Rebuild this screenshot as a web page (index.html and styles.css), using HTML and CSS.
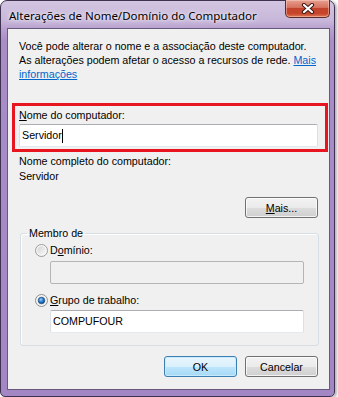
FILE: index.html
```html
<!DOCTYPE html>
<html lang="pt-BR">
<head>
    <meta charset="UTF-8">
    <title>Alterações de Nome/Domínio do Computador</title>
    <link rel="stylesheet" href="styles.css">
</head>
<body>

    <div class="window">
        <div class="titlebar">
            <span class="title">Alterações de Nome/Domínio do Computador</span>
            <div class="close-btn">
                <svg width="14" height="11" viewBox="0 0 14 11">
                    <path d="M3 2 L11 9 M11 2 L3 9" stroke="#3b1a16" stroke-width="4.2" stroke-linecap="round"/>
                    <path d="M3 2 L11 9 M11 2 L3 9" stroke="#ffffff" stroke-width="2.2" stroke-linecap="round"/>
                </svg>
            </div>
        </div>

        <div class="client">
            <p class="intro">
                Você pode alterar o nome e a associação deste computador.<br>
                As alterações podem afetar o acesso a recursos de rede. <a href="#">Mais<br>informações</a>
            </p>

            <div class="highlight">
                <label class="field-label" for="computer-name"><u>N</u>ome do computador:</label>
                <div class="textbox" id="computer-name">Servidor<span class="caret"></span></div>
            </div>

            <p class="full-label">Nome completo do computador:</p>
            <p class="full-name">Servidor</p>

            <div class="more-row">
                <button class="btn" type="button"><u>M</u>ais...</button>
            </div>

            <fieldset class="group">
                <legend>Membro de</legend>

                <div class="radio-row">
                    <svg class="radio" width="13" height="13" viewBox="0 0 13 13">
                        <defs>
                            <linearGradient id="rOff" x1="0" y1="0" x2="1" y2="1">
                                <stop offset="0" stop-color="#d4d4d4"/>
                                <stop offset="1" stop-color="#f8f8f8"/>
                            </linearGradient>
                        </defs>
                        <circle cx="6.5" cy="6.5" r="6" fill="#f6f6f6" stroke="#9a9b9b"/>
                        <circle cx="6.5" cy="6.5" r="4.2" fill="url(#rOff)"/>
                    </svg>
                    <span>D<u>o</u>mínio:</span>
                </div>
                <div class="textbox disabled"></div>

                <div class="radio-row second">
                    <svg class="radio" width="13" height="13" viewBox="0 0 13 13">
                        <defs>
                            <radialGradient id="rOn" cx="0.4" cy="0.35" r="0.7">
                                <stop offset="0" stop-color="#9fd3ff"/>
                                <stop offset="0.5" stop-color="#2f7fd0"/>
                                <stop offset="1" stop-color="#0d3f7a"/>
                            </radialGradient>
                        </defs>
                        <circle cx="6.5" cy="6.5" r="6" fill="#f4f4f4" stroke="#8e8f8f"/>
                        <circle cx="6.5" cy="6.5" r="4.2" fill="#e2e2e2"/>
                        <circle cx="6.5" cy="6.5" r="3.2" fill="url(#rOn)" stroke="#1a4f85" stroke-width="0.8"/>
                    </svg>
                    <span><u>G</u>rupo de trabalho:</span>
                </div>
                <div class="textbox workgroup">COMPUFOUR</div>
            </fieldset>

            <div class="dialog-buttons">
                <button class="btn default" type="button">OK</button>
                <button class="btn" type="button">Cancelar</button>
            </div>
        </div>
    </div>

</body>
</html>
```

FILE: styles.css
```css
body {
    margin: 0;
    background-color: #fff;
    font-family: "Liberation Sans", Arial, sans-serif;
    font-size: 10.7px;
    color: #000;
}

/* window frame */
.window {
    width: 335px;
    height: 397px;
    box-sizing: border-box;
    border: 1px solid #3f3150;
    border-radius: 7px 7px 5px 5px;
    padding: 0 4px 6px 6px;
    background: linear-gradient(to bottom, #d3c6e1 0, #c7b6d9 20px, #b9a2d0 27px, #a98dc7 40px, #a386c4 100%);
    box-shadow: 2px 1px 3px rgba(0, 0, 0, 0.3);
    display: flex;
    flex-direction: column;
}

.titlebar {
    height: 27px;
    display: flex;
    justify-content: space-between;
    align-items: flex-start;
}

.title {
    font-family: "Noto Sans", "Open Sans", sans-serif;
    font-size: 11.5px;
    margin: 7px 0 0 2px;
    line-height: 16px;
    color: #000;
    text-shadow: 0 0 6px rgba(255, 255, 255, 0.9), 0 0 3px rgba(255, 255, 255, 0.8);
}

.close-btn {
    width: 45px;
    height: 18px;
    margin-top: -1px;
    box-sizing: border-box;
    border: 1px solid #5e2a25;
    border-top: none;
    border-radius: 0 0 5px 5px;
    background: linear-gradient(to bottom, #e6a08f 0, #d6705c 45%, #c2432c 50%, #c7452b 80%, #dd7b57 100%);
    box-shadow: inset 0 0 0 1px rgba(255, 220, 210, 0.45);
    display: flex;
    justify-content: center;
    align-items: center;
}

.client {
    flex: 1;
    border: 1px solid #67597a;
    background-color: #f0f0f0;
    display: flex;
    flex-direction: column;
}

.intro {
    margin: 10px 0 0 11px;
    line-height: 14px;
}

.intro a {
    color: #0066cc;
}

.highlight {
    margin: 22px 0 0 4px;
    width: 316px;
    box-sizing: border-box;
    border: 3px solid #e8141f;
    padding: 3px 0 2px 4px;
}

.field-label {
    display: block;
    line-height: 13px;
}

.textbox {
    width: 299px;
    height: 23px;
    box-sizing: border-box;
    margin-top: 2px;
    border: 1px solid #e3e9ef;
    border-top-color: #abadb3;
    border-left-color: #dbdfe6;
    border-right-color: #dbdfe6;
    border-radius: 2px;
    background-color: #fff;
    padding: 0 2px;
    line-height: 21px;
    display: flex;
    align-items: center;
}

.caret {
    display: inline-block;
    width: 1px;
    height: 14px;
    background-color: #000;
}

.full-label {
    margin: 3px 0 0 11px;
    line-height: 13px;
}

.full-name {
    margin: 2px 0 0 11px;
    line-height: 13px;
}

.more-row {
    margin-top: 14px;
    padding-right: 11px;
    display: flex;
    justify-content: flex-end;
}

.btn {
    width: 73px;
    height: 21px;
    padding: 0;
    font-family: inherit;
    font-size: 10.7px;
    color: #000;
    border: 1px solid #707070;
    border-radius: 3px;
    background: linear-gradient(to bottom, #f2f2f2 0, #ebebeb 50%, #dddddd 50%, #cfcfcf 100%);
    box-shadow: inset 0 0 0 1px rgba(255, 255, 255, 0.75);
}

.btn.default {
    border-color: #3c7fb1;
    background: linear-gradient(to bottom, #eaf6fd 0, #d9f0fc 50%, #bee6fd 50%, #a7d9f5 100%);
    box-shadow: inset 0 0 0 1px rgba(200, 235, 255, 0.9);
}

/* Membro de */
.group {
    margin: 9px 0 0 12px;
    width: 299px;
    box-sizing: border-box;
    padding: 4px 0 12px 0;
    border: 1px solid #d5dfe5;
    border-radius: 3px;
    box-shadow: inset 1px 1px 0 #fff;
}

.group legend {
    margin-left: 6px;
    padding: 0 2px;
    line-height: 13px;
}

.radio-row {
    margin-left: 14px;
    height: 13px;
    line-height: 13px;
    display: flex;
    align-items: center;
    gap: 2px;
}

.radio-row.second {
    margin-top: 10px;
}

.group .textbox {
    width: 254px;
    margin: 4px 0 0 29px;
}

.group .textbox.workgroup {
    margin-top: 3px;
}

.textbox.disabled {
    background-color: #f0f0f0;
    border-color: #b5b5b5;
}

.dialog-buttons {
    margin-top: 10px;
    padding-right: 11px;
    display: flex;
    justify-content: flex-end;
    gap: 8px;
}
```
